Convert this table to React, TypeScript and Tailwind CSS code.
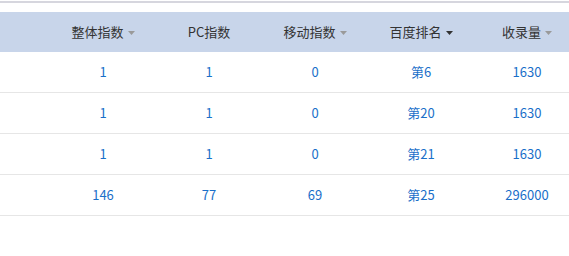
import React from 'react';

type Row = { all: string; pc: string; mobile: string; rank: string; count: string };

const rows: Row[] = [
  { all: '1', pc: '1', mobile: '0', rank: '第6', count: '1630' },
  { all: '1', pc: '1', mobile: '0', rank: '第20', count: '1630' },
  { all: '1', pc: '1', mobile: '0', rank: '第21', count: '1630' },
  { all: '146', pc: '77', mobile: '69', rank: '第25', count: '296000' },
];

const headers = [
  { label: '整体指数', arrow: 'gray' },
  { label: 'PC指数', arrow: null },
  { label: '移动指数', arrow: 'gray' },
  { label: '百度排名', arrow: 'dark' },
  { label: '收录量', arrow: 'gray' },
];

const Caret = ({ dark }: { dark: boolean }) => (
  <svg width="7" height="4" viewBox="0 0 7 4" className="ml-[4px] mt-[2px]">
    <polygon points="0,0 7,0 3.5,4" fill={dark ? '#333333' : '#9a9a9a'} />
  </svg>
);

export default function App() {
  return (
    <div className="w-[569px] h-[256px] bg-white overflow-hidden text-[13px] font-['Noto_Sans_CJK_SC','Microsoft_YaHei',sans-serif]">
      <div className="h-[2px] mt-[1px] bg-[#d6d6de]" />
      <div className="mt-[9px] w-[640px]">
        <div className="grid grid-cols-[50px_106px_106px_106px_106px_106px] h-[40px] bg-[#c8d5ea] text-[#333]">
          <div />
          {headers.map((h) => (
            <div key={h.label} className="flex items-center justify-center">
              <span>{h.label}</span>
              {h.arrow && <Caret dark={h.arrow === 'dark'} />}
            </div>
          ))}
        </div>
        {rows.map((r, i) => (
          <div
            key={i}
            className="grid grid-cols-[50px_106px_106px_106px_106px_106px] h-[41px] border-b border-[#e6e6e6] text-[#1a6fc9] items-center"
          >
            <div />
            <div className="text-center">{r.all}</div>
            <div className="text-center">{r.pc}</div>
            <div className="text-center">{r.mobile}</div>
            <div className="text-center">{r.rank}</div>
            <div className="text-center">{r.count}</div>
          </div>
        ))}
      </div>
    </div>
  );
}
